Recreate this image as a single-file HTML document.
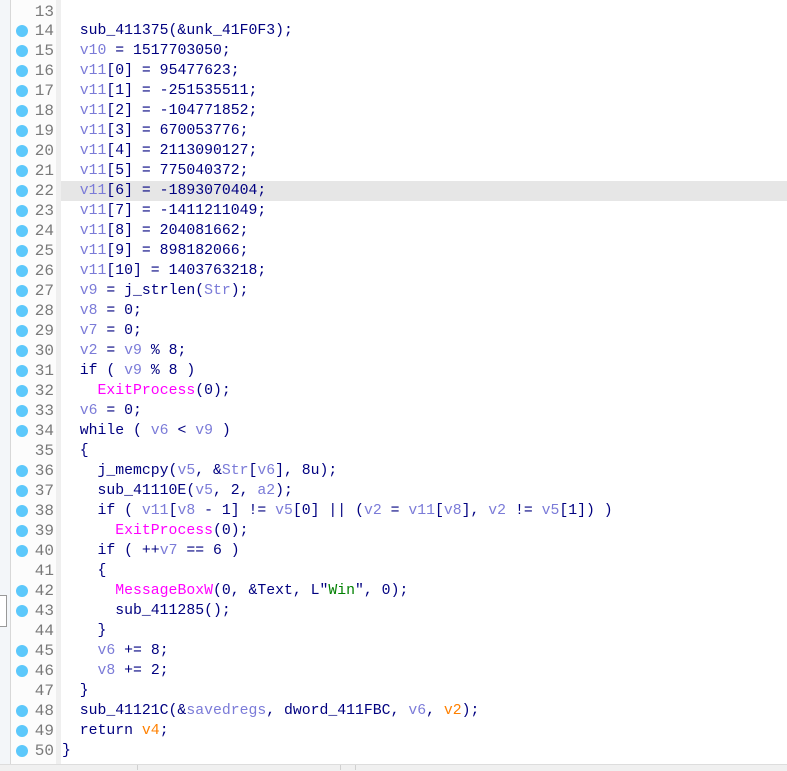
<!DOCTYPE html>
<html><head><style>
body{margin:0;width:787px;height:770px;overflow:hidden;background:#fff;position:relative;font-family:"Liberation Mono",monospace;font-size:14.8px}
#left{position:absolute;left:0;top:0;width:10px;height:770px;background:#f3f6f9;border-right:1px solid #d8d8d8}
#box{position:absolute;left:0;top:595px;width:6px;height:30px;border:1px solid #999;border-left:none;background:#fff}
#gut{position:absolute;left:11px;top:0;width:45px;height:765px;background:#fcfcfc}
#gs{position:absolute;left:56px;top:0;width:5px;height:765px;background:#efefef}
#bot{position:absolute;left:0;top:764px;width:787px;height:6px;background:#f0f0f0;border-top:1px solid #ddd}
.sep{position:absolute;top:765px;width:1px;height:5px;background:#d0d0d0}
.l{position:absolute;left:0;height:20px;line-height:20px;width:787px;white-space:pre}
.n{position:absolute;left:18px;width:36px;text-align:right;color:#7a7a7a;font-size:16px}
.d{position:absolute;left:16px;top:4px;width:12px;height:12px;border-radius:50%;background:#5cc8fb}
.c{position:absolute;left:62px;color:#000080}
.hl{position:absolute;left:61px;right:0;top:0;height:20px;background:#e6e6e6}
.v{color:#7b7bd8}.f{color:#ff00ff}.o{color:#ff8000}.s{color:#008000}
</style></head><body>
<div id="left"></div><div id="box"></div><div id="gut"></div><div id="gs"></div><div id="bot"></div>
<div class="sep" style="left:137px"></div><div class="sep" style="left:340px"></div><div class="sep" style="left:355px"></div>
<div class="l" style="top:2px"><span class="n">13</span></div>
<div class="l" style="top:21px"><i class="d"></i><span class="n">14</span><span class="c">  sub_411375(&amp;unk_41F0F3);</span></div>
<div class="l" style="top:41px"><i class="d"></i><span class="n">15</span><span class="c">  <span class="v">v10</span> = 1517703050;</span></div>
<div class="l" style="top:61px"><i class="d"></i><span class="n">16</span><span class="c">  <span class="v">v11</span>[0] = 95477623;</span></div>
<div class="l" style="top:81px"><i class="d"></i><span class="n">17</span><span class="c">  <span class="v">v11</span>[1] = -251535511;</span></div>
<div class="l" style="top:101px"><i class="d"></i><span class="n">18</span><span class="c">  <span class="v">v11</span>[2] = -104771852;</span></div>
<div class="l" style="top:121px"><i class="d"></i><span class="n">19</span><span class="c">  <span class="v">v11</span>[3] = 670053776;</span></div>
<div class="l" style="top:141px"><i class="d"></i><span class="n">20</span><span class="c">  <span class="v">v11</span>[4] = 2113090127;</span></div>
<div class="l" style="top:161px"><i class="d"></i><span class="n">21</span><span class="c">  <span class="v">v11</span>[5] = 775040372;</span></div>
<div class="l" style="top:181px"><div class="hl"></div><i class="d"></i><span class="n">22</span><span class="c">  <span class="v">v11</span>[6] = -1893070404;</span></div>
<div class="l" style="top:201px"><i class="d"></i><span class="n">23</span><span class="c">  <span class="v">v11</span>[7] = -1411211049;</span></div>
<div class="l" style="top:221px"><i class="d"></i><span class="n">24</span><span class="c">  <span class="v">v11</span>[8] = 204081662;</span></div>
<div class="l" style="top:241px"><i class="d"></i><span class="n">25</span><span class="c">  <span class="v">v11</span>[9] = 898182066;</span></div>
<div class="l" style="top:261px"><i class="d"></i><span class="n">26</span><span class="c">  <span class="v">v11</span>[10] = 1403763218;</span></div>
<div class="l" style="top:281px"><i class="d"></i><span class="n">27</span><span class="c">  <span class="v">v9</span> = j_strlen(<span class="v">Str</span>);</span></div>
<div class="l" style="top:301px"><i class="d"></i><span class="n">28</span><span class="c">  <span class="v">v8</span> = 0;</span></div>
<div class="l" style="top:321px"><i class="d"></i><span class="n">29</span><span class="c">  <span class="v">v7</span> = 0;</span></div>
<div class="l" style="top:341px"><i class="d"></i><span class="n">30</span><span class="c">  <span class="v">v2</span> = <span class="v">v9</span> % 8;</span></div>
<div class="l" style="top:361px"><i class="d"></i><span class="n">31</span><span class="c">  if ( <span class="v">v9</span> % 8 )</span></div>
<div class="l" style="top:381px"><i class="d"></i><span class="n">32</span><span class="c">    <span class="f">ExitProcess</span>(0);</span></div>
<div class="l" style="top:401px"><i class="d"></i><span class="n">33</span><span class="c">  <span class="v">v6</span> = 0;</span></div>
<div class="l" style="top:421px"><i class="d"></i><span class="n">34</span><span class="c">  while ( <span class="v">v6</span> &lt; <span class="v">v9</span> )</span></div>
<div class="l" style="top:441px"><span class="n">35</span><span class="c">  {</span></div>
<div class="l" style="top:461px"><i class="d"></i><span class="n">36</span><span class="c">    j_memcpy(<span class="v">v5</span>, &amp;<span class="v">Str</span>[<span class="v">v6</span>], 8u);</span></div>
<div class="l" style="top:481px"><i class="d"></i><span class="n">37</span><span class="c">    sub_41110E(<span class="v">v5</span>, 2, <span class="v">a2</span>);</span></div>
<div class="l" style="top:501px"><i class="d"></i><span class="n">38</span><span class="c">    if ( <span class="v">v11</span>[<span class="v">v8</span> - 1] != <span class="v">v5</span>[0] || (<span class="v">v2</span> = <span class="v">v11</span>[<span class="v">v8</span>], <span class="v">v2</span> != <span class="v">v5</span>[1]) )</span></div>
<div class="l" style="top:521px"><i class="d"></i><span class="n">39</span><span class="c">      <span class="f">ExitProcess</span>(0);</span></div>
<div class="l" style="top:541px"><i class="d"></i><span class="n">40</span><span class="c">    if ( ++<span class="v">v7</span> == 6 )</span></div>
<div class="l" style="top:561px"><span class="n">41</span><span class="c">    {</span></div>
<div class="l" style="top:581px"><i class="d"></i><span class="n">42</span><span class="c">      <span class="f">MessageBoxW</span>(0, &amp;Text, L"<span class="s">Win</span>", 0);</span></div>
<div class="l" style="top:601px"><i class="d"></i><span class="n">43</span><span class="c">      sub_411285();</span></div>
<div class="l" style="top:621px"><span class="n">44</span><span class="c">    }</span></div>
<div class="l" style="top:641px"><i class="d"></i><span class="n">45</span><span class="c">    <span class="v">v6</span> += 8;</span></div>
<div class="l" style="top:661px"><i class="d"></i><span class="n">46</span><span class="c">    <span class="v">v8</span> += 2;</span></div>
<div class="l" style="top:681px"><span class="n">47</span><span class="c">  }</span></div>
<div class="l" style="top:701px"><i class="d"></i><span class="n">48</span><span class="c">  sub_41121C(&amp;<span class="v">savedregs</span>, dword_411FBC, <span class="v">v6</span>, <span class="o">v2</span>);</span></div>
<div class="l" style="top:721px"><i class="d"></i><span class="n">49</span><span class="c">  return <span class="o">v4</span>;</span></div>
<div class="l" style="top:741px"><i class="d"></i><span class="n">50</span><span class="c">}</span></div>
</body></html>
